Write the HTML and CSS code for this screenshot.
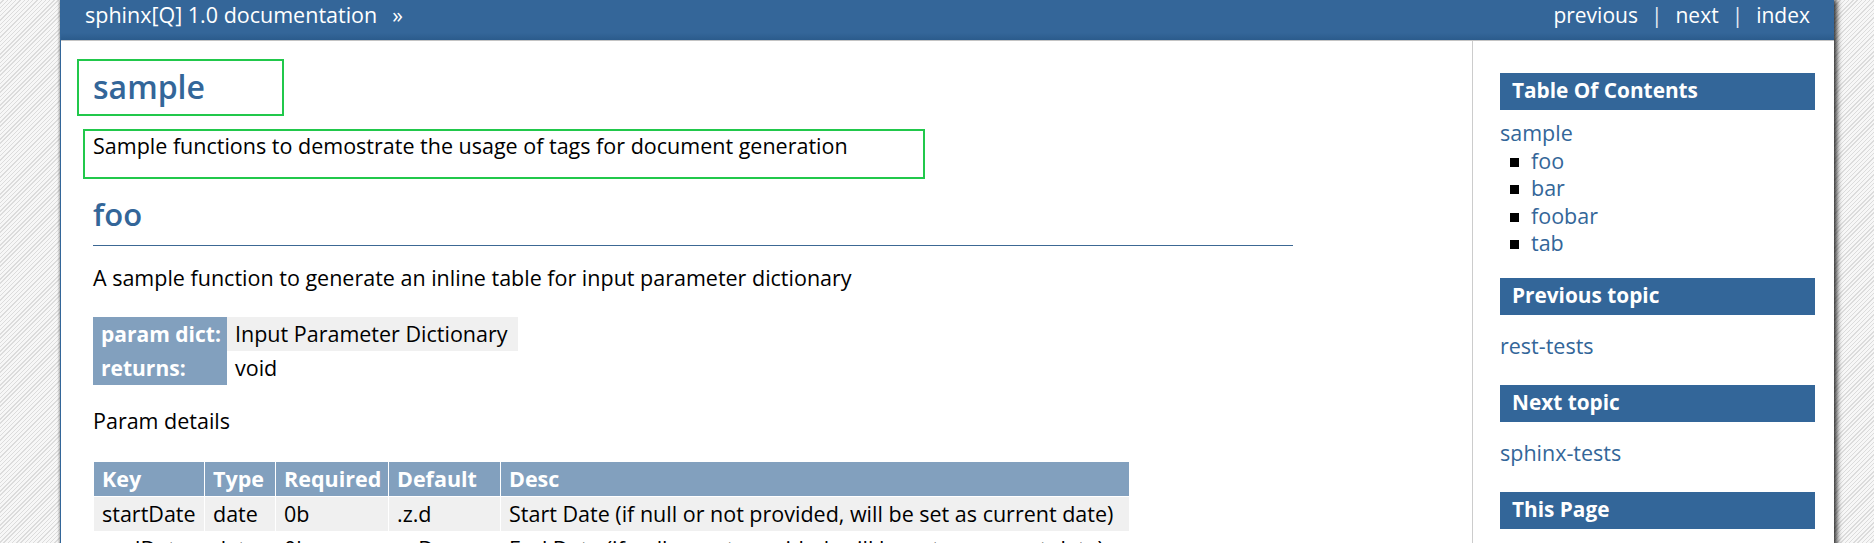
FILE: index.html
```html
<!DOCTYPE html>
<html lang="en">
<head>
<meta charset="utf-8">
<title>sample — sphinx[Q] 1.0 documentation</title>
<link rel="stylesheet" href="styles.css">
</head>
<body>
<div class="page">
  <div class="related">
    <div class="rel-left"><a class="rel-link" href="#">sphinx[Q] 1.0 documentation</a><span class="raquo">»</span></div>
    <div class="rel-right"><a class="rel-link" href="#">previous</a><span class="sep">|</span><a class="rel-link" href="#">next</a><span class="sep">|</span><a class="rel-link" href="#">index</a></div>
  </div>
  <div class="document">
    <div class="body">
      <div class="mark mark-title"><h1 class="title">sample</h1></div>
      <div class="mark mark-intro"><p class="intro">Sample functions to demostrate the usage of tags for document generation</p></div>
      <h2 class="section">foo</h2>
      <p class="lead">A sample function to generate an inline table for input parameter dictionary</p>
      <table class="fields">
        <tr class="frow-odd"><th class="fname">param dict:</th><td class="fbody">Input Parameter Dictionary</td></tr>
        <tr class="frow-even"><th class="fname">returns:</th><td class="fbody">void</td></tr>
      </table>
      <p class="details">Param details</p>
      <table class="params">
        <colgroup><col class="c-key"><col class="c-type"><col class="c-req"><col class="c-def"><col class="c-desc"></colgroup>
        <thead>
          <tr class="phead"><th>Key</th><th>Type</th><th>Required</th><th>Default</th><th>Desc</th></tr>
        </thead>
        <tbody>
          <tr class="prow-odd"><td>startDate</td><td>date</td><td>0b</td><td>.z.d</td><td>Start Date (if null or not provided, will be set as current date)</td></tr>
          <tr class="prow-even"><td>endDate</td><td>date</td><td>0b</td><td>.z.D</td><td>End Date (if null or not provided, will be set as current date)</td></tr>
        </tbody>
      </table>
    </div>
    <div class="sidebar">
      <h3 class="side-title">Table Of Contents</h3>
      <div class="toc">
        <a class="side-link" href="#">sample</a>
        <ul class="toc-list">
          <li class="toc-item"><a class="side-link" href="#">foo</a></li>
          <li class="toc-item"><a class="side-link" href="#">bar</a></li>
          <li class="toc-item"><a class="side-link" href="#">foobar</a></li>
          <li class="toc-item"><a class="side-link" href="#">tab</a></li>
        </ul>
      </div>
      <h3 class="side-title side-gap">Previous topic</h3>
      <p class="side-p"><a class="side-link" href="#">rest-tests</a></p>
      <h3 class="side-title side-gap">Next topic</h3>
      <p class="side-p"><a class="side-link" href="#">sphinx-tests</a></p>
      <h3 class="side-title side-gap">This Page</h3>
    </div>
  </div>
</div>
</body>
</html>
```

FILE: styles.css
```css
html, body {
  margin: 0;
  height: 100%;
}

body {
  overflow: hidden;
  font-family: "Open Sans", "DejaVu Sans", sans-serif;
  font-size: 21.5px;
  color: #000;
  background: repeating-linear-gradient(135deg, #f7f7f7 0 2px, #dcdcdc 2px 3px);
}

a {
  text-decoration: none;
}

.page {
  margin-left: 60px;
  width: 1773px;
  min-height: 100%;
  background: #fff;
  border-left: 1px solid #336699;
  box-shadow: 3px 0 5px rgba(0, 0, 0, 0.8), -1px 0 2px rgba(0, 0, 0, 0.25);
}

/* header bar */
.related {
  display: flex;
  justify-content: space-between;
  height: 40px;
  padding: 0 24px;
  line-height: 30px;
  color: #fff;
  background: linear-gradient(#346699 82%, #2b5b8c);
  border-bottom: 1px solid #c4c4c4;
}

.rel-right {
  font-size: 21px;
}

.rel-link {
  color: #fff;
}

.raquo {
  margin-left: 15px;
}

.sep {
  margin: 0 13px;
  color: #e4ebf3;
}

/* layout */
.document {
  display: flex;
}

.body {
  flex: 1;
  padding: 18px 0 0 16px;
}

/* green highlight frames */
.mark {
  box-sizing: border-box;
  border: 2px solid #21c84b;
}

.mark-title {
  width: 207px;
  height: 57px;
  padding: 6px 0 0 14px;
}

.mark-intro {
  width: 842px;
  height: 50px;
  margin: 13px 0 0 6px;
  padding: 0 0 0 8px;
}

.title,
.section {
  margin: 0;
  font-size: 31px;
  line-height: 40px;
  font-weight: 600;
  color: #336699;
}

.title {
  font-size: 32px;
}

.intro {
  margin: 0;
  line-height: 30px;
}

.section {
  width: 1200px;
  margin: 15px 0 0 16px;
  padding-bottom: 11px;
  border-bottom: 1px solid #3c6894;
}

.lead {
  margin: 17px 0 0 16px;
  line-height: 30px;
}

/* field list */
.fields {
  margin: 24px 0 0 16px;
  border-collapse: collapse;
}

.fname {
  width: 120px;
  padding: 2px 6px 2px 8px;
  line-height: 30px;
  text-align: left;
  white-space: nowrap;
  color: #fff;
  font-size: 21px;
  font-weight: 700;
  background: #82a0be;
}

.fbody {
  padding: 2px 10px 2px 8px;
  line-height: 30px;
  white-space: nowrap;
}

.frow-odd .fbody {
  background: #f0f0f0;
}

.details {
  margin: 21px 0 0 16px;
  line-height: 30px;
}

/* parameter table */
.params {
  width: 1036px;
  margin: 25px 0 0 16px;
  border-collapse: collapse;
  table-layout: fixed;
}

.c-key { width: 111px; }
.c-type { width: 71px; }
.c-req { width: 113px; }
.c-def { width: 112px; }
.c-desc { width: 629px; }

.params th,
.params td {
  padding: 2px 8px;
  line-height: 30px;
  text-align: left;
  white-space: nowrap;
  border: 1px solid #fff;
}

.phead th {
  color: #fff;
  font-weight: 700;
  background: #82a0be;
}

.prow-odd td {
  background: #f0f0f0;
}

/* sidebar */
.sidebar {
  box-sizing: border-box;
  width: 362px;
  flex: none;
  padding: 32px 19px 0 27px;
  border-left: 1px solid #cccccc;
}

.side-title {
  margin: 0;
  padding: 0 12px 3px;
  line-height: 34px;
  font-size: 20.8px;
  font-weight: 700;
  color: #fff;
  background: #336699;
}

.side-gap {
  margin-top: 25.5px;
}

.toc {
  margin-top: 9px;
  line-height: 27.5px;
}

.toc + .side-gap {
  margin-top: 21.5px;
}

.side-link {
  color: #336699;
}

.toc-list {
  list-style: none;
  margin: 0;
  padding: 0;
}

.toc-item {
  padding-left: 10px;
}

.toc-item::before {
  content: "";
  display: inline-block;
  width: 9px;
  height: 9px;
  margin-right: 12px;
  vertical-align: 2px;
  background: #000;
}

.side-p {
  margin: 17px 0 0;
  line-height: 27.5px;
}
```
